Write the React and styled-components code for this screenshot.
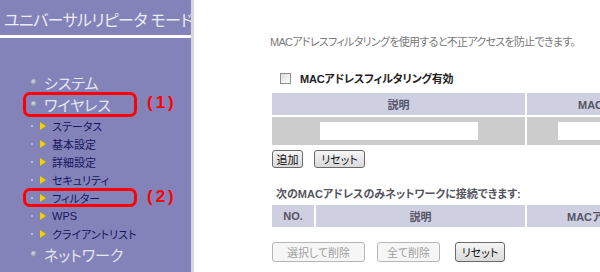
import React from 'react'
import styled, { createGlobalStyle } from 'styled-components'

const Global = createGlobalStyle`
    body {
        margin: 0;
        background: #ffffff;
        font-family: "Liberation Sans", "Noto Sans CJK JP", sans-serif;
        font-feature-settings: "palt";
    }
`;

const Page = styled.div`
    display: flex;
    width: 600px;
    height: 272px;
    overflow: hidden;
`;

const Sidebar = styled.div`
    flex: 0 0 191px;
    min-width: 0;
    overflow: hidden;
    display: flex;
    flex-direction: column;
    background: #8383ba;
    border-right: 3px solid #d6d6de;
`;

const Brand = styled.div`
    height: 38px;
    box-sizing: border-box;
    padding: 3px 0 0 4px;
    line-height: 35px;
    font-size: 16px;
    letter-spacing: -0.6px;
    color: #ececf6;
    white-space: nowrap;
    overflow: hidden;
    border-bottom: 3px solid #ffffff;
`;

const Menu = styled.div`
    padding-top: 33px;
    display: flex;
    flex-direction: column;
`;

const Item = styled.div`
    position: relative;
    display: flex;
    align-items: center;
    height: ${p => (p.sub ? '18px' : '22px')};
    padding-left: 31px;
    font-size: ${p => (p.sub ? '11px' : '15px')};
    color: ${p => (p.sub ? '#16165a' : '#e6e6f2')};
    white-space: nowrap;

    &::before {
        content: '';
        display: ${p => (p.marked ? 'block' : 'none')};
        position: absolute;
        left: 23px;
        width: 114px;
        top: -1px;
        bottom: ${p => (p.sub ? '0px' : '-2px')};
        box-sizing: border-box;
        border: 3px solid #ff0000;
        border-radius: 7px;
    }
`;

const Ball = styled.span`
    width: 6px;
    height: 6px;
    border-radius: 50%;
    background: radial-gradient(circle at 35% 35%, #d8e0ea, #7a8aa0 70%);
    margin-right: 7px;
`;

const Dot = styled.span`
    width: 2px;
    height: 2px;
    background: #b8b8d8;
`;

const Arrow = styled.span`
    width: 0;
    height: 0;
    margin-left: 7px;
    margin-right: 6px;
    border-top: 4px solid transparent;
    border-bottom: 4px solid transparent;
    border-left: 6px solid #f0d000;
    filter: drop-shadow(0.5px 0 0 #a08000);
`;

const Mark = styled.span`
    position: absolute;
    left: 147px;
    top: 50%;
    transform: translateY(-55%);
    font-family: "Liberation Sans", sans-serif;
    font-weight: 700;
    font-size: 17px;
    letter-spacing: 3px;
    color: #ff0000;
`;

const Main = styled.div`
    flex: 0 0 auto;
    display: flex;
    flex-direction: column;
    align-items: flex-start;
    padding-left: 78px;
    font-size: 11px;
`;

const Desc = styled.div`
    margin-top: 35px;
    line-height: 14px;
    color: #7a7a7a;
    margin-left: -2px;
    letter-spacing: -0.7px;
    white-space: nowrap;
`;

const CheckRow = styled.label`
    margin-top: 22px;
    display: flex;
    align-items: center;
    height: 14px;
    font-weight: 700;
    color: #222222;
    letter-spacing: -0.2px;
`;

const Check = styled.span`
    width: 11px;
    height: 11px;
    box-sizing: border-box;
    margin-left: 8px;
    margin-right: 9px;
    border: 1px solid #8e8e8e;
    background: linear-gradient(135deg, #dcdcdc, #ffffff);
`;

const Grid = styled.div`
    display: grid;
    grid-template-columns: ${p => p.cols};
    grid-template-rows: ${p => p.rows};
    gap: 2px;
    margin-top: ${p => p.top}px;
`;

const Th = styled.div`
    display: flex;
    align-items: center;
    justify-content: ${p => (p.left ? 'flex-start' : 'center')};
    padding-left: ${p => p.left || 0}px;
    background: #cfcfe2;
    font-weight: 700;
    color: #555566;
    white-space: nowrap;
    overflow: hidden;
`;

const Td = styled.div`
    display: flex;
    align-items: center;
    justify-content: ${p => (p.left ? 'flex-start' : 'center')};
    padding-left: ${p => p.left || 0}px;
    background: #cccccc;
    overflow: hidden;
`;

const Field = styled.input`
    width: 158px;
    height: 18px;
    box-sizing: border-box;
    border: none;
    background: #ffffff;
    flex: 0 0 auto;
`;

const Buttons = styled.div`
    display: flex;
    margin-top: ${p => p.top}px;
    gap: ${p => p.gap}px;
`;

const Button = styled.button`
    width: ${p => p.w}px;
    height: ${p => p.h}px;
    margin-left: ${p => p.ml || 0}px;
    padding: 0;
    font-family: "Liberation Sans", "Noto Sans CJK JP", sans-serif;
    font-feature-settings: "palt";
    font-size: 11px;
    color: #111111;
    border: 1px solid #6a6a6a;
    border-radius: 3px;
    background: linear-gradient(#f6f6f6, #d9d9d9);

    &:disabled {
        color: #a0a0a0;
        border-color: #b6b6b6;
        background: #f6f6f6;
    }
`;

const Heading = styled.div`
    margin-top: 19px;
    padding-left: 4px;
    line-height: 14px;
    font-weight: 700;
    color: #555560;
`;

const subs = ['ステータス', '基本設定', '詳細設定', 'セキュリティ', 'フィルター', 'WPS', 'クライアントリスト'];

const App = () => {
    return (
        <Page>
            <Global />
            <Sidebar>
                <Brand>ユニバーサルリピータ モード</Brand>
                <Menu>
                    <Item><Ball />システム</Item>
                    <Item marked><Ball />ワイヤレス<Mark>(1)</Mark></Item>
                    <div style={{ height: 2 }} />
                    {subs.map(s => (
                        <Item sub key={s} marked={s === 'フィルター'}>
                            <Dot /><Arrow />{s}
                            {s === 'フィルター' && <Mark>(2)</Mark>}
                        </Item>
                    ))}
                    <Item><Ball />ネットワーク</Item>
                </Menu>
            </Sidebar>
            <Main>
                <Desc>MACアドレスフィルタリングを使用すると不正アクセスを防止できます。</Desc>
                <CheckRow><Check />MACアドレスフィルタリング有効</CheckRow>
                <Grid cols="253px 220px" rows="22px 28px" top={8}>
                    <Th>説明</Th>
                    <Th left={51}>MACアドレス</Th>
                    <Td><Field /></Td>
                    <Td left={31}><Field /></Td>
                </Grid>
                <Buttons top={5} gap={11}>
                    <Button w={31} h={18}>追加</Button>
                    <Button w={51} h={18}>リセット</Button>
                </Buttons>
                <Heading>次のMACアドレスのみネットワークに接続できます:</Heading>
                <Grid cols="42px 209px 200px" rows="22px" top={4}>
                    <Th>NO.</Th>
                    <Th>説明</Th>
                    <Th left={40}>MACアドレス</Th>
                </Grid>
                <Buttons top={15} gap={12}>
                    <Button w={93} h={20} disabled>選択して削除</Button>
                    <Button w={63} h={20} disabled>全て削除</Button>
                    <Button w={50} h={20} ml={3}>リセット</Button>
                </Buttons>
            </Main>
        </Page>
    )
}

export default App
